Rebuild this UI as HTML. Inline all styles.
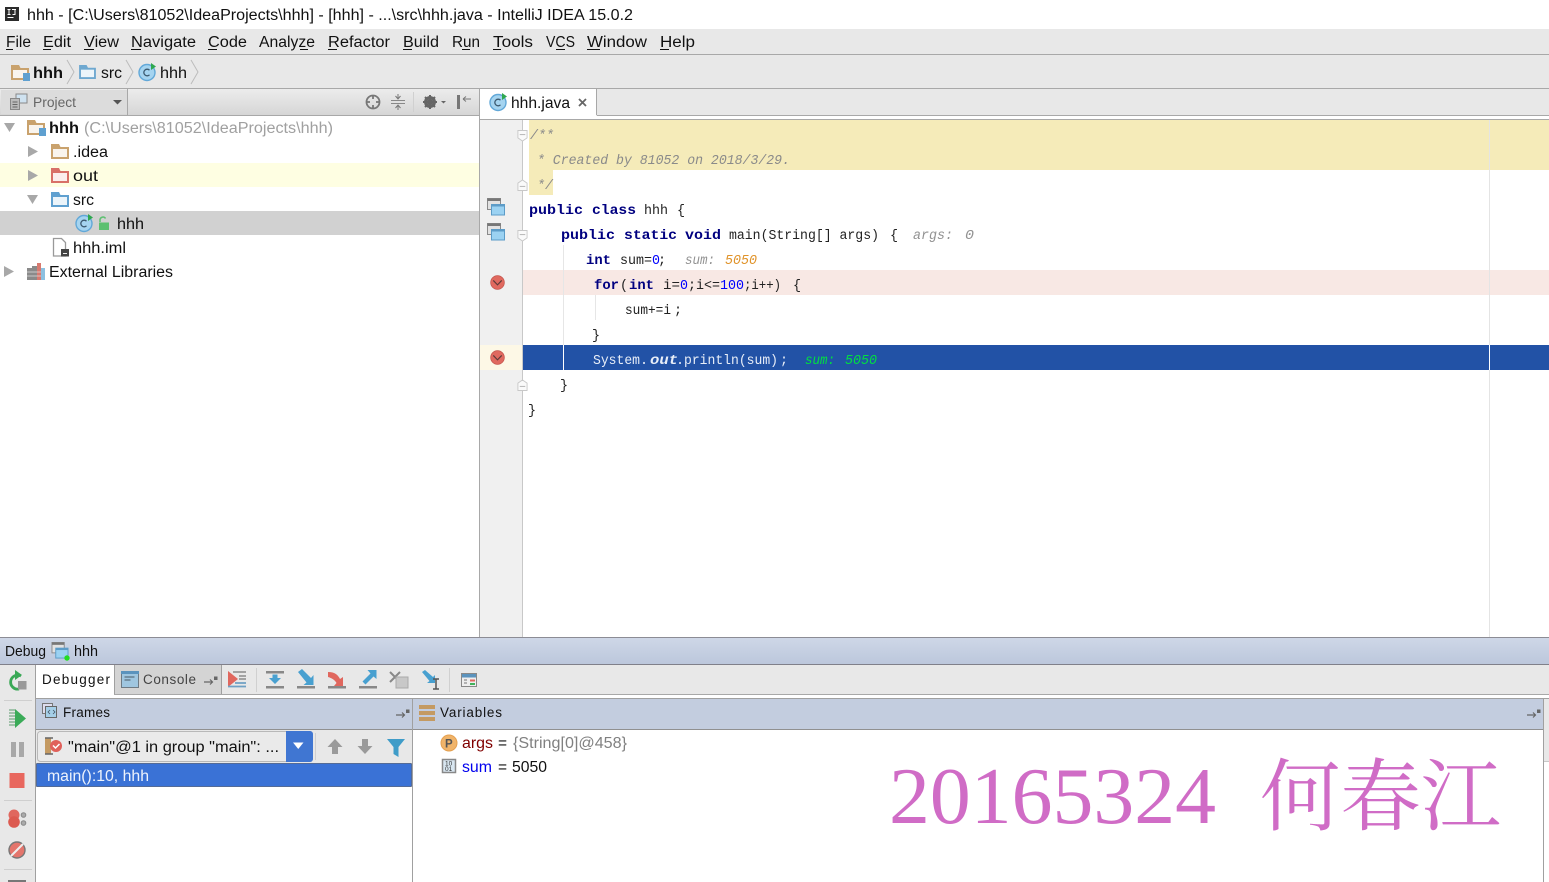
<!DOCTYPE html>
<html><head><meta charset="utf-8"><title>hhh - IntelliJ IDEA</title>
<style>
html,body{margin:0;padding:0;background:#fff;width:1549px;height:882px;overflow:hidden}
svg{display:block}
text{font-family:"Liberation Sans","Noto Sans CJK SC",sans-serif;font-size:15.5px;fill:#111;white-space:pre}
.s{font-size:13.5px}
.m{font-family:"Liberation Mono",monospace;font-size:13.4px;fill:#222}
.k{font-family:"Liberation Mono",monospace;font-size:13.4px;font-weight:bold;fill:#000080}
.c{font-family:"Liberation Mono",monospace;font-size:13.4px;font-style:italic;fill:#8a8a8a}
.n{font-family:"Liberation Mono",monospace;font-size:13.4px;fill:#0000ff}
.g{font-family:"Liberation Mono",monospace;font-size:13.4px;font-style:italic;fill:#929292}
.o{font-family:"Liberation Mono",monospace;font-size:13.4px;font-style:italic;fill:#e0932a}
.w{font-family:"Liberation Mono",monospace;font-size:13.4px;fill:#e8eef8}
.gr{font-family:"Liberation Mono",monospace;font-size:13.4px;font-style:italic;fill:#00e040}
.wm{font-family:"Liberation Serif",serif;font-size:81px;fill:#d06cc6}
.wc{font-family:"Noto Serif CJK SC",serif;font-size:79px;fill:#d06cc6}
</style></head><body>
<svg width="1549" height="882" viewBox="0 0 1549 882" xmlns="http://www.w3.org/2000/svg">
<defs>
<linearGradient id="dbg" x1="0" y1="0" x2="0" y2="1"><stop offset="0" stop-color="#ced7e7"/><stop offset="1" stop-color="#bcc7dc"/></linearGradient>
<linearGradient id="hd" x1="0" y1="0" x2="0" y2="1"><stop offset="0" stop-color="#ececec"/><stop offset="1" stop-color="#d6d6d6"/></linearGradient>
<symbol id="cls" viewBox="0 0 20 20" overflow="visible">
<circle cx="9" cy="10.5" r="8" fill="#a5d4f0" stroke="#62a8d8" stroke-width="1.4"/>
<path d="M11.5 8.2A3.3 3.3 0 1 0 11.5 12.8" fill="none" stroke="#3c5a70" stroke-width="1.3"/>
<path d="M13 1l5 3.500-5 3.500z" fill="#2fa84f"/>
</symbol>
<symbol id="bp" viewBox="0 0 16 16" overflow="visible">
<circle cx="8" cy="8" r="7.300" fill="#e0695f" stroke="#c4564e" stroke-width=".8"/>
<path d="M3.500 5.800L8 10.500l4.500-4.700" fill="none" stroke="#5a3a38" stroke-width="1.200"/>
</symbol>
<symbol id="ov" viewBox="0 0 18 18" overflow="visible">
<rect x=".5" y=".5" width="13" height="11" fill="#e2e2e2" stroke="#8a8a8a"/><rect x=".5" y=".5" width="13" height="2.500" fill="#777"/>
<rect x="4.500" y="6.500" width="13" height="10.500" fill="#9bd2f2" stroke="#5c9cc8"/><rect x="4.500" y="6.500" width="13" height="2" fill="#5c9cc8"/>
</symbol>
<symbol id="fold" viewBox="0 0 12 13" overflow="visible">
<path d="M1 .5h10v8l-5 3.500-5-3.500z" fill="#fafafa" stroke="#c8c8c8"/><path d="M3 5h6" stroke="#b0b0b0"/>
</symbol>
<symbol id="foldu" viewBox="0 0 12 13" overflow="visible">
<path d="M1 12.500v-8l5-3.500 5 3.500v8z" fill="#fafafa" stroke="#c8c8c8"/><path d="M3 8h6" stroke="#b0b0b0"/>
</symbol>
<symbol id="pin" viewBox="0 0 14 10" overflow="visible">
<path d="M0 7h8M6 4.500l2.500 2.500L6 9.500" fill="none" stroke="#666" stroke-width="1.200"/><rect x="10" y="1.500" width="3.500" height="3.500" fill="#666"/>
</symbol>
<symbol id="fld" viewBox="0 0 18 15" overflow="visible">
<path d="M0 0h8l1.500 3H18v12H0z" fill="currentColor"/><rect x="2" y="5" width="14" height="8" fill="#fff" fill-opacity=".88"/>
</symbol>
</defs>

<!-- title -->
<rect width="1549" height="29" fill="#fff"/>
<rect x="5" y="7" width="14" height="14" fill="#2b2b2b"/>
<path d="M7.500 9.500h3M9 9.500v5M7.500 14.500h3M12 9.500h4M15 9.500v5h-2.500M7.500 17.500h6" fill="none" stroke="#fff" stroke-width="1"/>
<text x="27" y="20" textLength="606" lengthAdjust="spacingAndGlyphs">hhh - [C:\Users\81052\IdeaProjects\hhh] - [hhh] - ...\src\hhh.java - IntelliJ IDEA 15.0.2</text>

<!-- menu -->
<rect y="29" width="1549" height="26" fill="#e8e8e8"/><rect y="54" width="1549" height="1" fill="#a8a8a8"/>
<g>
<text x="6" y="47" textLength="25" lengthAdjust="spacingAndGlyphs">File</text><rect x="6" y="49" width="7" height="1" fill="#111"/>
<text x="43" y="47" textLength="28" lengthAdjust="spacingAndGlyphs">Edit</text><rect x="43" y="49" width="8" height="1" fill="#111"/>
<text x="84" y="47" textLength="35" lengthAdjust="spacingAndGlyphs">View</text><rect x="84" y="49" width="10" height="1" fill="#111"/>
<text x="131" y="47" textLength="65" lengthAdjust="spacingAndGlyphs">Navigate</text><rect x="131" y="49" width="10" height="1" fill="#111"/>
<text x="208" y="47" textLength="39" lengthAdjust="spacingAndGlyphs">Code</text><rect x="208" y="49" width="9" height="1" fill="#111"/>
<text x="259" y="47" textLength="56" lengthAdjust="spacingAndGlyphs">Analyze</text><rect x="300" y="49" width="8" height="1" fill="#111"/>
<text x="328" y="47" textLength="62" lengthAdjust="spacingAndGlyphs">Refactor</text><rect x="328" y="49" width="9" height="1" fill="#111"/>
<text x="403" y="47" textLength="36" lengthAdjust="spacingAndGlyphs">Build</text><rect x="403" y="49" width="9" height="1" fill="#111"/>
<text x="452" y="47" textLength="28" lengthAdjust="spacingAndGlyphs">Run</text><rect x="462" y="49" width="8" height="1" fill="#111"/>
<text x="493" y="47" textLength="40" lengthAdjust="spacingAndGlyphs">Tools</text><rect x="493" y="49" width="8" height="1" fill="#111"/>
<text x="546" y="47" textLength="29" lengthAdjust="spacingAndGlyphs">VCS</text><rect x="556" y="49" width="9" height="1" fill="#111"/>
<text x="587" y="47" textLength="60" lengthAdjust="spacingAndGlyphs">Window</text><rect x="587" y="49" width="13" height="1" fill="#111"/>
<text x="660" y="47" textLength="35" lengthAdjust="spacingAndGlyphs">Help</text><rect x="660" y="49" width="9" height="1" fill="#111"/>
</g>

<!-- nav bar -->
<rect y="55" width="1549" height="33" fill="#e8e8e8"/><rect y="88" width="1549" height="1" fill="#a8a8a8"/>
<use href="#fld" x="11" y="65" width="18" height="15" color="#c9a26d"/><rect x="23" y="73" width="7" height="8" fill="#5fa0d0"/>
<text x="33" y="78" font-weight="bold" textLength="30" lengthAdjust="spacingAndGlyphs">hhh</text>
<path d="M67 60l7 12-7 12" fill="none" stroke="#bcbcbc"/>
<use href="#fld" x="79" y="65" width="17" height="14" color="#6ea8d0"/>
<text x="101" y="78" textLength="21" lengthAdjust="spacingAndGlyphs">src</text>
<path d="M126 60l7 12-7 12" fill="none" stroke="#bcbcbc"/>
<use href="#cls" x="138" y="62" width="20" height="20"/>
<text x="160" y="78" textLength="27" lengthAdjust="spacingAndGlyphs">hhh</text>
<path d="M191 60l7 12-7 12" fill="none" stroke="#bcbcbc"/>

<!-- project panel header -->
<rect y="89" width="479" height="26" fill="url(#hd)"/><rect y="115" width="479" height="1" fill="#a8a8a8"/>
<rect x="1" y="90" width="126" height="24" fill="#dcdcdc"/><rect x="127" y="89" width="1" height="26" fill="#a8a8a8"/>
<rect x="16" y="94" width="11" height="9" fill="#cfe2f0" stroke="#888"/><rect x="10.500" y="98.500" width="9" height="11" fill="#bbb" stroke="#888"/>
<path d="M12.500 102h5M12.500 104.500h5M12.500 107h5" stroke="#666"/>
<text x="33" y="107" style="font-size:14px;fill:#666" textLength="43" lengthAdjust="spacingAndGlyphs">Project</text>
<path d="M113 100h9l-4.500 4.500z" fill="#555"/>
<circle cx="373" cy="102" r="6.500" fill="none" stroke="#777" stroke-width="1.800"/><path d="M373 95v4M373 105v4M366 102h4M376 102h4" stroke="#777" stroke-width="1.800"/>
<path d="M391 100.500h14M391 103.500h14" stroke="#888"/><path d="M398 94v4M398 106v4M395.500 96l2.500 3 2.500-3M395.500 108l2.500-3 2.500 3" fill="none" stroke="#777"/>
<rect x="413" y="92" width="1" height="20" fill="#d0d0d0"/>
<circle cx="430" cy="102" r="4.500" fill="none" stroke="#666" stroke-width="3"/><path d="M430 95v14M423 102h14M425 97l10 10M435 97l-10 10" stroke="#666" stroke-width="2"/>
<path d="M441 101h5l-2.500 2.500z" fill="#666"/>
<rect x="457" y="95" width="3" height="14" fill="#777"/><path d="M463 99h8M463 99l3-2.500M463 99l3 2.500" fill="none" stroke="#777"/>

<!-- project tree -->
<rect y="163" width="479" height="24" fill="#fefee2"/>
<rect y="211" width="479" height="24" fill="#d1d1d1"/>
<path d="M4 123h11l-5.500 9z" fill="#a8a8a8"/>
<use href="#fld" x="27" y="120" width="18" height="15" color="#c9a26d"/><rect x="39" y="128" width="7" height="8" fill="#5fa0d0"/>
<text x="49" y="133" font-weight="bold" textLength="30" lengthAdjust="spacingAndGlyphs">hhh</text>
<text x="84" y="133" style="fill:#a0a0a0" textLength="249" lengthAdjust="spacingAndGlyphs">(C:\Users\81052\IdeaProjects\hhh)</text>
<path d="M28 146l10 5.500-10 5.500z" fill="#a8a8a8"/>
<use href="#fld" x="51" y="144" width="18" height="15" color="#c9a26d"/>
<text x="73" y="157" textLength="35" lengthAdjust="spacingAndGlyphs">.idea</text>
<path d="M28 170l10 5.500-10 5.500z" fill="#a8a8a8"/>
<use href="#fld" x="51" y="168" width="18" height="15" color="#d87068"/>
<text x="73" y="181" textLength="25" lengthAdjust="spacingAndGlyphs">out</text>
<path d="M27 195h11l-5.500 9z" fill="#a8a8a8"/>
<use href="#fld" x="51" y="192" width="18" height="15" color="#5fa0d0"/>
<text x="73" y="205" textLength="21" lengthAdjust="spacingAndGlyphs">src</text>
<use href="#cls" x="75" y="213" width="20" height="20"/>
<rect x="99" y="222.500" width="10" height="7.500" fill="#5cc070"/><path d="M100 222v-2.500a3 3 0 0 1 5.500-1" fill="none" stroke="#5cc070" stroke-width="1.500"/>
<text x="117" y="229" textLength="27" lengthAdjust="spacingAndGlyphs">hhh</text>
<path d="M53.500 238.500h8l4 4v13.500h-12z" fill="#fff" stroke="#999" stroke-width="1.300"/><rect x="61" y="249" width="8" height="7.500" fill="#444"/><rect x="63" y="253" width="4" height="1" fill="#eee"/>
<text x="73" y="253" textLength="53" lengthAdjust="spacingAndGlyphs">hhh.iml</text>
<path d="M4 266l10 5.500-10 5.500z" fill="#a8a8a8"/>
<rect x="27" y="268" width="5" height="12" fill="#8a8a8a"/><rect x="32" y="266" width="5" height="14" fill="#8a8a8a"/><rect x="37" y="263" width="4" height="17" fill="#d87a70"/><rect x="41" y="268" width="4" height="12" fill="#8cc0e0"/>
<path d="M27 272h14M27 276h14" stroke="#ddd" stroke-width=".7"/>
<text x="49" y="277" textLength="124" lengthAdjust="spacingAndGlyphs">External Libraries</text>
<rect x="479" y="89" width="1" height="549" fill="#a8a8a8"/>

<!-- editor tabs -->
<rect x="480" y="89" width="1069" height="27" fill="#e8e8e8"/><rect x="480" y="89" width="116" height="27" fill="#fff"/>
<rect x="596" y="89" width="1" height="26" fill="#a8a8a8"/><rect x="597" y="115" width="952" height="1" fill="#a8a8a8"/>
<rect x="480" y="116" width="1069" height="3" fill="#fff"/><rect x="480" y="119" width="1069" height="1" fill="#a8a8a8"/>
<use href="#cls" x="489" y="92" width="20" height="20"/>
<text x="511" y="108" textLength="59" lengthAdjust="spacingAndGlyphs">hhh.java</text>
<path d="M579 99l7 7M586 99l-7 7" stroke="#666" stroke-width="1.800"/>

<!-- gutter & editor -->
<rect x="480" y="120" width="42" height="518" fill="#f0f0f0"/><rect x="522" y="120" width="1" height="518" fill="#c8c8c8"/>
<rect x="529" y="120" width="1020" height="50" fill="#f5ebb9"/><rect x="529" y="170" width="24" height="25" fill="#f5ebb9"/>
<rect x="523" y="270" width="1026" height="25" fill="#f8e8e4"/>
<rect x="480" y="345" width="42" height="25" fill="#fdf8e6"/>
<rect x="523" y="345" width="1026" height="25" fill="#2252a6"/>
<rect x="1489" y="120" width="1" height="518" fill="#e4e4e4"/><rect x="1489" y="345" width="1" height="25" fill="#fff"/>
<rect x="563" y="245" width="1" height="100" fill="#e6e6e6"/><rect x="563" y="345" width="1" height="25" fill="#fff"/>
<rect x="595" y="295" width="1" height="25" fill="#e6e6e6"/>

<use href="#fold" x="517" y="130" width="11" height="12"/>
<use href="#foldu" x="517" y="179" width="11" height="12"/>
<use href="#fold" x="517" y="230" width="11" height="12"/>
<use href="#foldu" x="517" y="379" width="11" height="12"/>
<use href="#ov" x="487" y="198" width="18" height="18"/>
<use href="#ov" x="487" y="223" width="18" height="18"/>
<use href="#bp" x="490" y="275" width="15" height="15"/>
<use href="#bp" x="490" y="350" width="15" height="15"/>

<text class="c" x="530" y="139" textLength="24" lengthAdjust="spacingAndGlyphs">/**</text>
<text class="c" x="537" y="164" textLength="253" lengthAdjust="spacingAndGlyphs">* Created by 81052 on 2018/3/29.</text>
<text class="c" x="537" y="189" textLength="16" lengthAdjust="spacingAndGlyphs">*/</text>

<text class="k" x="529" y="214" textLength="54" lengthAdjust="spacingAndGlyphs">public</text>
<text class="k" x="592" y="214" textLength="44" lengthAdjust="spacingAndGlyphs">class</text>
<text class="m" x="644" y="214" textLength="24" lengthAdjust="spacingAndGlyphs">hhh</text>
<text class="m" x="677" y="214">{</text>

<text class="k" x="561" y="239" textLength="54" lengthAdjust="spacingAndGlyphs">public</text>
<text class="k" x="624" y="239" textLength="53" lengthAdjust="spacingAndGlyphs">static</text>
<text class="k" x="685" y="239" textLength="36" lengthAdjust="spacingAndGlyphs">void</text>
<text class="m" x="729" y="239" textLength="150" lengthAdjust="spacingAndGlyphs">main(String[] args)</text>
<text class="m" x="890" y="239">{</text>
<text class="g" x="913" y="239" textLength="40" lengthAdjust="spacingAndGlyphs">args:</text>
<text class="g" x="965" y="239" textLength="9" lengthAdjust="spacingAndGlyphs">0</text>

<text class="k" x="586" y="264" textLength="25" lengthAdjust="spacingAndGlyphs">int</text>
<text class="m" x="620" y="264" textLength="32" lengthAdjust="spacingAndGlyphs">sum=</text>
<text class="n" x="652" y="264" textLength="8" lengthAdjust="spacingAndGlyphs">0</text>
<text class="m" x="658" y="264">;</text>
<text class="g" x="685" y="264" textLength="30" lengthAdjust="spacingAndGlyphs">sum:</text>
<text class="o" x="725" y="264" textLength="32" lengthAdjust="spacingAndGlyphs">5050</text>

<text class="k" x="594" y="289" textLength="25" lengthAdjust="spacingAndGlyphs">for</text>
<text class="m" x="620" y="289">(</text>
<text class="k" x="629" y="289" textLength="25" lengthAdjust="spacingAndGlyphs">int</text>
<text class="m" x="663" y="289" textLength="17" lengthAdjust="spacingAndGlyphs">i=</text>
<text class="n" x="680" y="289" textLength="8" lengthAdjust="spacingAndGlyphs">0</text>
<text class="m" x="688" y="289" textLength="32" lengthAdjust="spacingAndGlyphs">;i&lt;=</text>
<text class="n" x="720" y="289" textLength="24" lengthAdjust="spacingAndGlyphs">100</text>
<text class="m" x="744" y="289" textLength="37" lengthAdjust="spacingAndGlyphs">;i++)</text>
<text class="m" x="793" y="289">{</text>

<text class="m" x="625" y="314" textLength="46" lengthAdjust="spacingAndGlyphs">sum+=i</text>
<text class="m" x="674" y="314">;</text>
<text class="m" x="592" y="339">}</text>

<text class="w" x="593" y="364" textLength="47" lengthAdjust="spacingAndGlyphs">System</text>
<text class="w" x="640" y="364">.</text>
<text class="w" style="font-weight:bold;font-style:italic" x="650" y="364" textLength="28" lengthAdjust="spacingAndGlyphs">out</text>
<text class="w" x="676" y="364">.</text>
<text class="w" x="684" y="364" textLength="94" lengthAdjust="spacingAndGlyphs">println(sum)</text>
<text class="w" x="780" y="364">;</text>
<text class="gr" x="805" y="364" textLength="30" lengthAdjust="spacingAndGlyphs">sum:</text>
<text class="gr" x="845" y="364" textLength="32" lengthAdjust="spacingAndGlyphs">5050</text>
<text class="m" x="560" y="389">}</text>
<text class="m" x="528" y="414">}</text>

<!-- debug header -->
<rect y="637" width="1549" height="1" fill="#8c8c94"/>
<rect y="638" width="1549" height="26" fill="url(#dbg)"/>
<rect y="664" width="1549" height="1" fill="#80808a"/>
<text x="5" y="656" textLength="41" lengthAdjust="spacingAndGlyphs" style="font-size:14.500px">Debug</text>
<use href="#ov" x="51" y="642" width="18" height="17"/><circle cx="67" cy="658" r="2.700" fill="#22dd22"/>
<text x="74" y="656" textLength="24" lengthAdjust="spacingAndGlyphs" style="font-size:14.500px">hhh</text>

<!-- left toolbar -->
<rect y="665" width="35" height="217" fill="#e8e8e8"/><rect x="35" y="665" width="1" height="217" fill="#a0a0a0"/>
<path d="M21 676a7 7 0 1 0-2 13" fill="none" stroke="#3aa856" stroke-width="2.800"/><path d="M15 670l7 5-7 5z" fill="#3aa856"/><rect x="18" y="681" width="8.500" height="8.500" fill="#999"/>
<rect x="4" y="700" width="28" height="1" fill="#cfcfcf"/>
<path d="M15 709l11 9.500-11 9.500z" fill="#3aab58"/><path d="M9 710h6M9 713h6M9 716h6M9 719h6M9 722h6M9 725h6" stroke="#5a9a6c"/>
<rect x="11" y="742" width="5" height="15" fill="#a8a8a8"/><rect x="19" y="742" width="5" height="15" fill="#a8a8a8"/>
<rect x="9.500" y="773" width="15" height="15" fill="#e8675e"/>
<rect x="4" y="800" width="28" height="1" fill="#cfcfcf"/>
<circle cx="14" cy="815" r="5.500" fill="#e0675e"/><circle cx="14" cy="822" r="5.800" fill="#dc5a50"/><circle cx="23.500" cy="815" r="2.300" fill="#aaa" stroke="#888"/><circle cx="23.500" cy="823" r="2.300" fill="#aaa" stroke="#888"/>
<circle cx="17" cy="850" r="8" fill="#e4756c" stroke="#777" stroke-width="1.400"/><path d="M11 856l12-12" stroke="#eee" stroke-width="2"/>
<rect x="4" y="869" width="28" height="1" fill="#cfcfcf"/><rect x="8" y="880" width="18" height="2" fill="#777"/>

<!-- debug tabs -->
<rect x="36" y="665" width="1513" height="29" fill="#e8e8e8"/>
<rect x="36" y="665" width="78" height="30" fill="#fff"/>
<rect x="115" y="665" width="106" height="29" fill="#d4d4d4"/><rect x="114" y="665" width="1" height="30" fill="#a0a0a0"/><rect x="221" y="665" width="1" height="29" fill="#a0a0a0"/>
<rect x="114" y="694" width="1435" height="1" fill="#a8a8a8"/>
<rect x="36" y="695" width="1513" height="3" fill="#fff"/>
<text class="s" x="42" y="684" textLength="68">Debugger</text>
<rect x="121.500" y="671.500" width="17" height="16" fill="#9fc6e0" stroke="#6e7a84"/><rect x="121" y="671" width="18" height="3" fill="#5b93bd"/><path d="M124.500 677h10M124.500 680h6" stroke="#4a5a66"/>
<text class="s" x="143" y="684" textLength="53" style="fill:#444">Console</text>
<use href="#pin" x="204" y="675" width="14" height="10"/>

<!-- step toolbar -->
<path d="M228 671l10 8-10 8z" fill="#e0675e"/><path d="M233 672h13M239 676h7M239 679h7" stroke="#8a8a8a" stroke-width="1.500"/><path d="M235 683h11M228 686.500h18" stroke="#6ea0c4" stroke-width="1.800"/>
<rect x="256" y="668" width="1" height="24" fill="#d0d0d0"/>
<rect x="266" y="671" width="18" height="2.500" fill="#888"/><rect x="266" y="686" width="18" height="2.500" fill="#888"/><path d="M272.500 674.500h5v3.500h3.500l-6 6-6-6h3.500z" fill="#48a0d0"/>
<path d="M298 672l4-3 9 9 2.500-3v10h-10l3-2.500z" fill="#48a0d0"/><rect x="297" y="686" width="18" height="2.500" fill="#888"/>
<path d="M328 672c7 0 10 3 12 7l3-2v9h-9l2.500-3c-1.500-3-5-5-8.500-6z" fill="#e0675e"/><rect x="328" y="686" width="18" height="2.500" fill="#888"/>
<path d="M376.500 670v9l-3-2.500-8 8-3-3 8-8-3-3.500z" fill="#48a0d0"/><rect x="359" y="686" width="18" height="2.500" fill="#888"/>
<path d="M390 672l10 10M400 672l-10 10" stroke="#888" stroke-width="2"/><rect x="396" y="677" width="12" height="11" fill="#c8c8c8" stroke="#aaa"/>
<path d="M422 672l3-2 8 7 2-2v8h-8l2.500-2z" fill="#48a0d0"/><path d="M433 679h6M433 689h6M436 679v10" stroke="#555" stroke-width="1.500"/>
<rect x="449" y="668" width="1" height="24" fill="#d0d0d0"/>
<rect x="461.500" y="673.500" width="15" height="13" fill="#eee" stroke="#888"/><rect x="462" y="674" width="14" height="3.500" fill="#5b93bd"/><path d="M464 680h3M464 683h3" stroke="#777"/><rect x="470" y="679.500" width="5" height="2" fill="#e0675e"/><rect x="470" y="683" width="5" height="2" fill="#3fb35a"/>

<!-- frames panel -->
<rect x="36" y="698" width="1513" height="1" fill="#a0a0a0"/>
<rect x="36" y="699" width="1507" height="30" fill="#c3cddf"/>
<rect x="36" y="729" width="1507" height="1" fill="#909090"/>
<rect x="412" y="698" width="1" height="184" fill="#a0a0a0"/>
<rect x="1543" y="698" width="1" height="184" fill="#a0a0a0"/>
<rect x="1544" y="699" width="5" height="62" fill="#e8e8e8"/><rect x="1544" y="761" width="5" height="1" fill="#c8c8c8"/>
<rect x="42.500" y="703.500" width="10" height="10" fill="#dde" stroke="#777"/><rect x="45.500" y="706.500" width="11" height="11" fill="#a5cfe8" stroke="#666"/><path d="M50 710l-2 2 2 2M53 710l2 2-2 2" fill="none" stroke="#456" stroke-width=".8"/>
<text class="s" x="63" y="717" textLength="47">Frames</text>
<use href="#pin" x="396" y="708" width="14" height="10"/>
<rect x="419" y="705" width="16" height="4" fill="#c49a62"/><rect x="419" y="711" width="16" height="4" fill="#c49a62"/><rect x="419" y="717" width="16" height="4" fill="#c49a62"/>
<text class="s" x="440" y="717" textLength="62">Variables</text>
<use href="#pin" x="1527" y="708" width="14" height="10"/>

<!-- frames body -->
<rect x="36" y="730" width="376" height="33" fill="#e8e8e8"/>
<rect x="37.500" y="731.500" width="275" height="30" rx="3" fill="#eaeaea" stroke="#b8b8b8"/>
<path d="M286 731h24a3 3 0 0 1 3 3v25a3 3 0 0 1-3 3h-24z" fill="#4076d2"/>
<path d="M293 742.500h10.500l-5.250 6.500z" fill="#fff"/>
<rect x="45" y="738" width="6" height="16" fill="#c49a62"/><path d="M45 738h8M45 754h8" stroke="#666" stroke-width="1.400"/>
<circle cx="56" cy="746" r="6" fill="#e0605a"/><path d="M53 745.500l2.500 2.500 4-4" fill="none" stroke="#fff" stroke-width="1.500"/>
<text x="68" y="752" textLength="211" lengthAdjust="spacingAndGlyphs">"main"@1 in group "main": ...</text>
<rect x="315" y="733" width="1" height="27" fill="#d0d0d0"/>
<path d="M335 739l7.500 8h-4.500v7h-6v-7h-4.500z" fill="#9a9a9a"/>
<path d="M365 754l-7.500-8h4.500v-7h6v7h4.500z" fill="#9a9a9a"/>
<path d="M387 739h18l-6.500 8v10l-5-3v-7z" fill="#3f9cc8"/>
<rect x="36.500" y="763.500" width="375" height="23" fill="#3a72d6" stroke="#0c1e44" stroke-dasharray="1 1"/>
<text x="47" y="781" textLength="102" lengthAdjust="spacingAndGlyphs" style="fill:#eef3fc">main():10, hhh</text>

<!-- variables -->
<circle cx="449" cy="743" r="8" fill="#f0b46a" stroke="#e4a050"/>
<text x="445" y="747.500" style="font-size:11.500px;font-weight:bold;fill:#555">P</text>
<text x="462" y="748" textLength="31" lengthAdjust="spacingAndGlyphs" style="fill:#800000">args</text>
<text x="498" y="748">=</text>
<text x="513" y="748" textLength="114" lengthAdjust="spacingAndGlyphs" style="fill:#808080">{String[0]@458}</text>
<rect x="442.500" y="759.500" width="13" height="13" fill="#d8e6f0" stroke="#888" stroke-width="1.500"/>
<text x="445" y="765.500" style="font-size:6.500px;fill:#333">10</text><text x="445" y="771" style="font-size:6.500px;fill:#333">01</text>
<text x="462" y="772" textLength="30" lengthAdjust="spacingAndGlyphs" style="fill:#0000ee">sum</text>
<text x="498" y="772">=</text>
<text x="512" y="772" textLength="35" lengthAdjust="spacingAndGlyphs">5050</text>

<!-- watermark -->
<text class="wm" x="889" y="823" textLength="327" lengthAdjust="spacingAndGlyphs">20165324</text>
<text class="wc" x="1260" y="824" textLength="241" lengthAdjust="spacingAndGlyphs">何春江</text>
</svg>
</body></html>
